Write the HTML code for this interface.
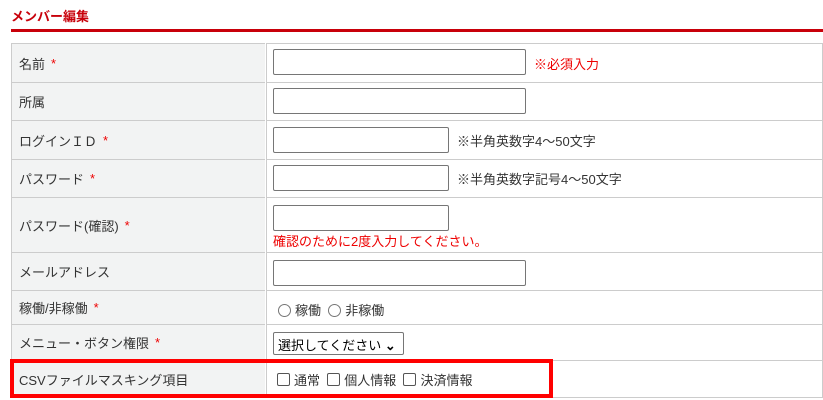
<!DOCTYPE html>
<html><head><meta charset="utf-8"><style>
body{margin:0;width:823px;height:400px;overflow:hidden;background:#fff;font-family:"Liberation Sans","Noto Sans CJK JP",sans-serif;font-size:13px;color:#333;position:relative}
.a{position:absolute}
.title{left:11px;top:6px;color:#c8000a;font-weight:bold;font-size:13px}
.line{left:11px;top:29px;width:812px;height:3px;background:#c8000a}
.lab{left:11px;width:254px;background:#f2f3f3;border:1px solid #ccc;border-right:none;box-sizing:border-box;padding-left:7px;display:flex;align-items:center}
.val{left:266px;width:557px;border:1px solid #ccc;box-sizing:border-box}
.st{color:#e00;margin-left:6px}
.in{position:absolute;border:1px solid #767676;border-radius:2px;height:26px;box-sizing:border-box;background:#fff}
.note{position:absolute;font-size:13px}
.red{color:#e00}
.rb{display:inline-block;width:11px;height:11px;border:1px solid #767676;border-radius:50%;vertical-align:-2px;margin-right:4px}
.cb{display:inline-block;width:11px;height:11px;border:1px solid #555;border-radius:2px;vertical-align:-1px;margin-right:4px}
</style></head><body>
<div class="a title">メンバー編集</div>
<div class="a line"></div>

<div class="a lab" style="top:43px;height:40px">名前<span class="st">*</span></div>
<div class="a val" style="top:43px;height:40px"><div class="in" style="left:6px;top:5px;width:253px"></div><div class="note red" style="left:267px;top:10px">※必須入力</div></div>

<div class="a lab" style="top:82px;height:39px">所属</div>
<div class="a val" style="top:82px;height:39px"><div class="in" style="left:6px;top:5px;width:253px"></div></div>

<div class="a lab" style="top:120px;height:40px">ログインＩＤ<span class="st">*</span></div>
<div class="a val" style="top:120px;height:40px"><div class="in" style="left:6px;top:6px;width:176px"></div><div class="note" style="left:190px;top:10px">※半角英数字4～50文字</div></div>

<div class="a lab" style="top:159px;height:39px">パスワード<span class="st">*</span></div>
<div class="a val" style="top:159px;height:39px"><div class="in" style="left:6px;top:5px;width:176px"></div><div class="note" style="left:190px;top:9px">※半角英数字記号4～50文字</div></div>

<div class="a lab" style="top:197px;height:56px">パスワード(確認)<span class="st">*</span></div>
<div class="a val" style="top:197px;height:56px"><div class="in" style="left:6px;top:7px;width:176px"></div><div class="note red" style="left:6px;top:33px">確認のために2度入力してください。</div></div>

<div class="a lab" style="top:252px;height:39px">メールアドレス</div>
<div class="a val" style="top:252px;height:39px"><div class="in" style="left:6px;top:7px;width:253px"></div></div>

<div class="a lab" style="top:290px;height:35px">稼働/非稼働<span class="st">*</span></div>
<div class="a val" style="top:290px;height:35px"><div class="note" style="left:11px;top:9px"><span class="rb"></span>稼働&nbsp;&nbsp;<span class="rb"></span>非稼働</div></div>

<div class="a lab" style="top:324px;height:37px">メニュー・ボタン権限<span class="st">*</span></div>
<div class="a val" style="top:324px;height:37px"><div class="in" style="left:6px;top:7px;width:131px;height:23px;padding:2px 0 0 4px;color:#000">選択してください <span style="font-weight:bold">⌄</span></div></div>

<div class="a lab" style="top:360px;height:38px">CSVファイルマスキング項目</div>
<div class="a val" style="top:360px;height:38px"><div class="note" style="left:10px;top:9px"><span class="cb"></span>通常&nbsp;&nbsp;<span class="cb"></span>個人情報&nbsp;&nbsp;<span class="cb"></span>決済情報</div></div>

<div class="a" style="left:10px;top:359px;width:543px;height:39px;border:4px solid #f00;box-sizing:border-box"></div>
</body></html>
